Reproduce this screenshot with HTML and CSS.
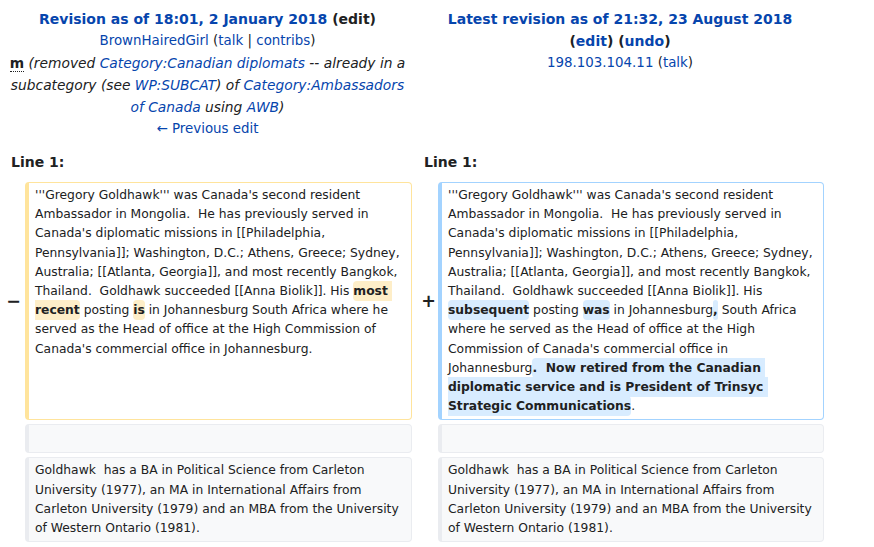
FILE: index.html
```html
<!DOCTYPE html>
<html lang="en">
<head>
<meta charset="utf-8">
<title>Gregory Goldhawk: Difference between revisions</title>
<link rel="stylesheet" href="styles.css">
</head>
<body>
<div class="diff">
  <div class="diff-title">
    <div class="rev-line title"><strong><a class="link" href="#">Revision as of 18:01, 2 January 2018</a> <span class="edit-old">(edit)</span></strong></div>
    <div class="rev-line"><a class="link" href="#">BrownHairedGirl</a> <span class="tools">(<a class="link" href="#">talk</a> | <a class="link" href="#">contribs</a>)</span></div>
    <div class="rev-line summary"><abbr class="minor" title="This is a minor edit">m</abbr> <span class="comment">(removed <a class="link" href="#">Category:Canadian diplomats</a> -- already in a subcategory (see <a class="link" href="#">WP:SUBCAT</a>) of <a class="link" href="#">Category:Ambassadors of Canada</a> using <a class="link" href="#">AWB</a>)</span></div>
    <div class="rev-line"><a class="link" href="#">← Previous edit</a></div>
  </div>
  <div class="diff-title">
    <div class="rev-line title"><strong><a class="link" href="#">Latest revision as of 21:32, 23 August 2018</a></strong></div>
    <div class="rev-line title"><strong>(<a class="link" href="#">edit</a>) (<a class="link" href="#">undo</a>)</strong></div>
    <div class="rev-line"><a class="link" href="#">198.103.104.11</a> <span class="tools">(<a class="link" href="#">talk</a>)</span></div>
  </div>

  <div class="diff-lineno">Line 1:</div>
  <div class="diff-lineno">Line 1:</div>

  <div class="diff-marker">−</div>
  <div class="diff-box deleted"><div class="line">'''Gregory Goldhawk''' was Canada's second resident Ambassador in Mongolia.  He has previously served in Canada's diplomatic missions in [[Philadelphia, Pennsylvania]]; Washington, D.C.; Athens, Greece; Sydney, Australia; [[Atlanta, Georgia]], and most recently Bangkok, Thailand.  Goldhawk succeeded [[Anna Biolik]]. His <del class="change del">most recent</del> posting <del class="change del">is</del> in Johannesburg South Africa where he served as the Head of office at the High Commission of Canada's commercial office in Johannesburg.</div></div>
  <div class="diff-marker plus">+</div>
  <div class="diff-box added"><div class="line">'''Gregory Goldhawk''' was Canada's second resident Ambassador in Mongolia.  He has previously served in Canada's diplomatic missions in [[Philadelphia, Pennsylvania]]; Washington, D.C.; Athens, Greece; Sydney, Australia; [[Atlanta, Georgia]], and most recently Bangkok, Thailand.  Goldhawk succeeded [[Anna Biolik]]. His <ins class="change ins">subsequent</ins> posting <ins class="change ins">was</ins> in Johannesburg<ins class="change ins">,</ins> South Africa where he served as the Head of office at the High Commission of Canada's commercial office in Johannesburg<ins class="change ins">.  Now retired from the Canadian diplomatic service and is President of Trinsyc Strategic Communications</ins>.</div></div>

  <div class="diff-marker"></div>
  <div class="diff-box context empty"></div>
  <div class="diff-marker"></div>
  <div class="diff-box context empty"></div>

  <div class="diff-marker"></div>
  <div class="diff-box context"><div class="line">Goldhawk  has a BA in Political Science from Carleton University (1977), an MA in International Affairs from Carleton University (1979) and an MBA from the University of Western Ontario (1981).</div></div>
  <div class="diff-marker"></div>
  <div class="diff-box context"><div class="line">Goldhawk  has a BA in Political Science from Carleton University (1977), an MA in International Affairs from Carleton University (1979) and an MBA from the University of Western Ontario (1981).</div></div>
</div>
</body>
</html>
```

FILE: styles.css
```css
html, body {
  margin: 0;
  padding: 0;
  background: #ffffff;
}

body {
  font-family: "DejaVu Sans", sans-serif;
  font-size: 14px;
  color: #202122;
}

.diff {
  display: grid;
  grid-template-columns: 18px 387px 18px 386px;
  column-gap: 4px;
  row-gap: 4px;
  margin: 8px 0 0 3px;
}

.diff-title {
  grid-column: span 2;
  text-align: center;
  line-height: 22px;
}

.rev-line {
  font-size: 13.4px;
  line-height: 22px;
}

.rev-line.title {
  font-size: 14px;
}

.rev-line.summary {
  font-size: 13.8px;
}

.link {
  color: #0645ad;
  text-decoration: none;
}

.edit-old {
  color: #202122;
}

.tools {
  color: #202122;
}

.minor {
  font-weight: bold;
  text-decoration: none;
  border-bottom: 1px dotted #202122;
  cursor: help;
}

.comment {
  font-style: italic;
}

.diff-lineno {
  grid-column: span 2;
  font-weight: bold;
  line-height: 22px;
  padding: 7px 8px 5px;
}

.diff-marker {
  align-self: center;
  text-align: right;
  font-weight: bold;
  font-size: 17.5px;
  line-height: 1.2;
}

.diff-marker.plus {
  margin-right: -2px;
}

.diff-box {
  font-size: 12.32px;
  line-height: 19.2px;
  border-style: solid;
  border-width: 1px 1px 1px 4px;
  border-radius: 4px;
  padding: 3px 6px;
  white-space: pre-wrap;
  word-wrap: break-word;
}

.deleted {
  border-color: #ffe49c;
}

.added {
  border-color: #a3d3ff;
}

.context {
  background: #f8f9fa;
  border-color: #eaecf0;
}

.empty {
  height: 29px;
  box-sizing: border-box;
}

.change {
  font-weight: bold;
  text-decoration: none;
  border-radius: 4px;
  padding: 3px 0;
}

.del {
  background: #feeec8;
}

.ins {
  background: #d8ecff;
}
```
